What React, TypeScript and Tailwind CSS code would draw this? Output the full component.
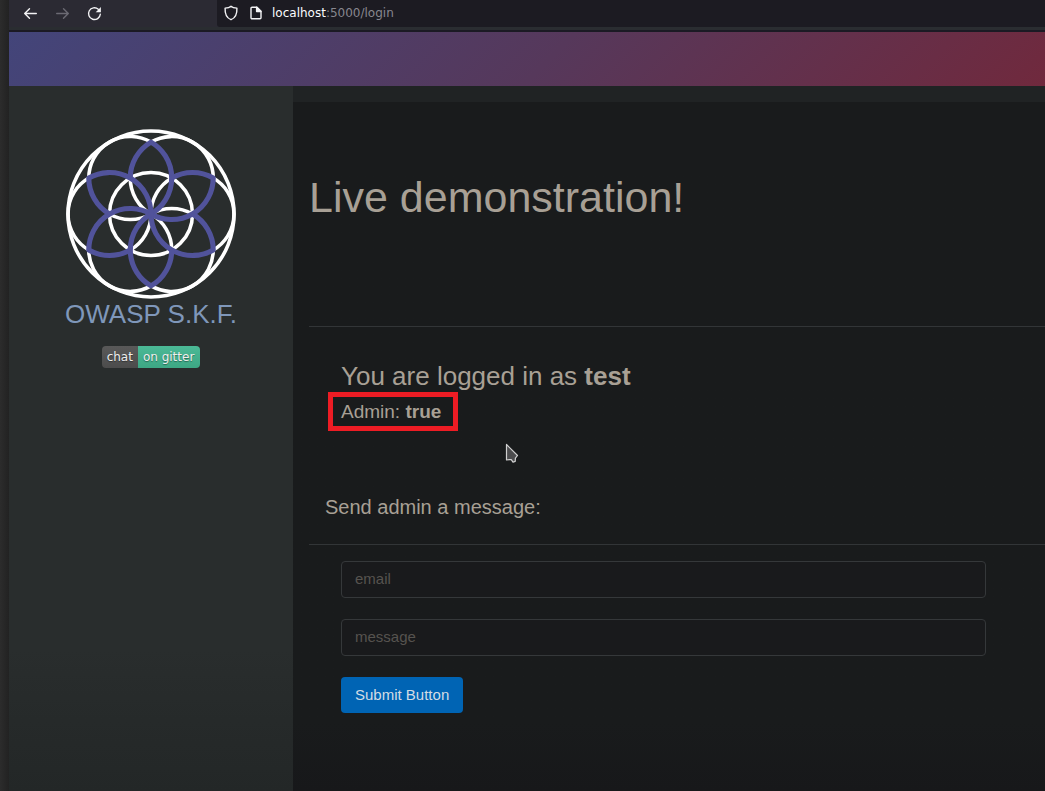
const petals = [0, 60, 120, 180, 240, 300];

function FlowerLogo() {
  return (
    <svg viewBox="-86 -86 172 172" className="size-[170px]" fill="none" role="img" aria-label="OWASP S.K.F. logo">
      <g stroke="#ffffff" strokeWidth="3.6">
        <circle r="84" />
        <circle r="42" />
        {petals.map((a) => (
          <g key={a} transform={`rotate(${a})`}>
            <path d="M0 -72.7A42 42 0 0 1 63 -36.4" />
            <path d="M-21 -36.4A42 42 0 0 0 0 0" />
          </g>
        ))}
      </g>
      <g stroke="#51539b" strokeWidth="5.2" strokeLinejoin="round">
        {petals.map((a) => (
          <path key={a} transform={`rotate(${a})`} d="M-21 -36.4A42 42 0 0 1 0 -72.7A42 42 0 0 1 0 0" />
        ))}
      </g>
    </svg>
  );
}

function BrowserBar() {
  return (
    <div className="flex h-[27px] bg-[#2b2a33]">
      <nav className="flex w-[208px] shrink-0 items-center gap-[17px] pb-px pl-[14px]">
        <button aria-label="Back" className="text-[#f3f3f5]">
          <svg className="size-[15px]" viewBox="0 0 15 15" fill="none" stroke="currentColor" strokeWidth="1.4" strokeLinecap="round" strokeLinejoin="round">
            <path d="M13.3 7.5H1.7M6.5 2.7L1.7 7.5l4.8 4.8" />
          </svg>
        </button>
        <button aria-label="Forward" className="text-[#6b6a73]">
          <svg className="size-[15px]" viewBox="0 0 15 15" fill="none" stroke="currentColor" strokeWidth="1.4" strokeLinecap="round" strokeLinejoin="round">
            <path d="M1.7 7.5h11.6M8.5 2.7l4.8 4.8-4.8 4.8" />
          </svg>
        </button>
        <button aria-label="Reload" className="text-[#f3f3f5]">
          <svg className="size-[15px]" viewBox="0 0 15 15" fill="none" stroke="currentColor" strokeWidth="1.4">
            <path d="M13.3 8.2A5.9 5.9 0 1 1 11.3 3.2" strokeLinecap="round" />
            <path d="M13.9 1v5.2H8.7z" fill="currentColor" stroke="none" />
          </svg>
        </button>
      </nav>
      <div className="flex min-w-0 flex-1 items-center rounded-bl-[3px] bg-[#1c1b22] pb-[2px] pl-[6px] text-[#f3f3f5]">
        <svg className="mr-[10px] size-4 shrink-0" viewBox="0 0 16 16" fill="none" stroke="currentColor" strokeWidth="1.4" strokeLinejoin="round">
          <path d="M8 1.3C6.8 2.4 4.4 3 2.1 3.1c-.3 5.2.9 9.6 5.9 11.6 5-2 6.2-6.4 5.9-11.6C11.6 3 9.2 2.4 8 1.3z" />
        </svg>
        <svg className="mr-[9px] size-[14px] shrink-0" viewBox="0 0 14 14" fill="none" stroke="currentColor" strokeWidth="1.4" strokeLinejoin="round">
          <path d="M3 1.2h5L12 5.200v6.600a1 1 0 0 1-1 1H3a1 1 0 0 1-1-1V2.200a1 1 0 0 1 1-1z" />
          <path d="M7.600 1.200v4.400H12z" fill="currentColor" />
        </svg>
        <p className="font-['DejaVu_Sans',sans-serif] text-[12px] leading-[16px] text-[#fbfbfe]">
          localhost<span className="text-[#88878f]">:5000/login</span>
        </p>
      </div>
    </div>
  );
}

function Sidebar() {
  return (
    <aside className="flex w-[284px] shrink-0 flex-col items-center bg-linear-to-b from-[#292d2d] from-80% to-[#232727] pt-[43px]">
      <a href="#home" className="flex flex-col items-center text-[26px] leading-[30px] text-[#7f97ba]">
        <FlowerLogo />
        <span>OWASP S.K.F.</span>
      </a>
      <a
        href="#chat"
        className="mt-[17px] flex h-[22px] items-center overflow-hidden rounded-[4px] font-['DejaVu_Sans',sans-serif] text-[12px] text-[#eeeeee] [text-shadow:0_1px_1px_#0006]"
      >
        <span className="flex h-full items-center bg-linear-to-b from-[#595959] to-[#4c4c4c] px-[5px]">chat</span>
        <span className="flex h-full items-center bg-linear-to-b from-[#4bb996] to-[#3da784] pr-[6px] pl-[5px]">on gitter</span>
      </a>
    </aside>
  );
}

function MouseCursor() {
  return (
    <svg className="absolute top-[82px] left-[164px] h-[21px] w-[14px]" viewBox="0 0 14 21" aria-hidden="true">
      <path d="M1.5 1.5V17l3-.3 1.800 0 1.700 2.500 2.200-.8.2-3.200L12.500 12.500z" fill="#4c4c4e" stroke="#d0d0d0" strokeWidth="1.2" strokeLinejoin="round" />
    </svg>
  );
}

const field =
  "block h-[37px] w-full rounded-[4px] border border-[#35383a] bg-[#191a1c] px-[13px] pb-[2px] text-[15px] text-[#a8a095] placeholder:text-[#56534f] focus:border-[#0064b4] focus:outline-none";

function Main() {
  return (
    <main className="min-w-0 flex-1 border-t-[16px] border-[#202324] bg-linear-to-b from-[#191b1c] from-90% to-[#17181a] pl-4 text-[#a8a095]">
      <h1 className="pt-[69px] text-[43px] leading-[52px]">Live demonstration!</h1>
      <hr className="mt-[103px] border-[#323537]" />
      <section className="relative mt-[34px] ml-8">
        <h2 className="text-[26px] leading-[31px]">
          You are logged in as <b>test</b>
        </h2>
        <p className="-ml-[13px] w-fit border-[5px] border-[#ed1c24] pr-[12px] pl-[8px] text-[19px] leading-[29px]">
          Admin: <b>true</b>
        </p>
        <MouseCursor />
      </section>
      <h3 className="mt-[63px] ml-4 text-[20px] leading-[26px]">Send admin a message:</h3>
      <hr className="mt-[24px] border-[#323537]" />
      <form className="mt-4 mr-[59px] ml-8 pb-[78px]" onSubmit={(e) => e.preventDefault()}>
        <input className={field} type="email" name="email" placeholder="email" aria-label="email" />
        <div className="mt-[21px]">
          <input className={field} type="text" name="message" placeholder="message" aria-label="message" />
        </div>
        <button className="mt-[21px] h-[36px] rounded-[4px] bg-[#0064b4] px-[14px] text-[15px] text-[#d3dce4]" type="submit">
          Submit Button
        </button>
      </form>
    </main>
  );
}

export default function App() {
  return (
    <div className="flex min-h-screen bg-[#191b1c] font-['Liberation_Sans',Arial,sans-serif]">
      <div className="w-[9px] shrink-0 bg-linear-to-r from-[#2c2c2c] to-[#222222]" />
      <div className="flex min-w-0 flex-1 flex-col">
        <BrowserBar />
        <div className="h-[5px] shrink-0 border-t-[3px] border-b-2 border-t-[#2a2d31] border-b-[#1b1a24]" />
        <header className="h-[54px] shrink-0 bg-[linear-gradient(135deg,#43457a,#56385b_52%,#70293d)]" />
        <div className="flex flex-1">
          <Sidebar />
          <Main />
        </div>
      </div>
    </div>
  );
}
